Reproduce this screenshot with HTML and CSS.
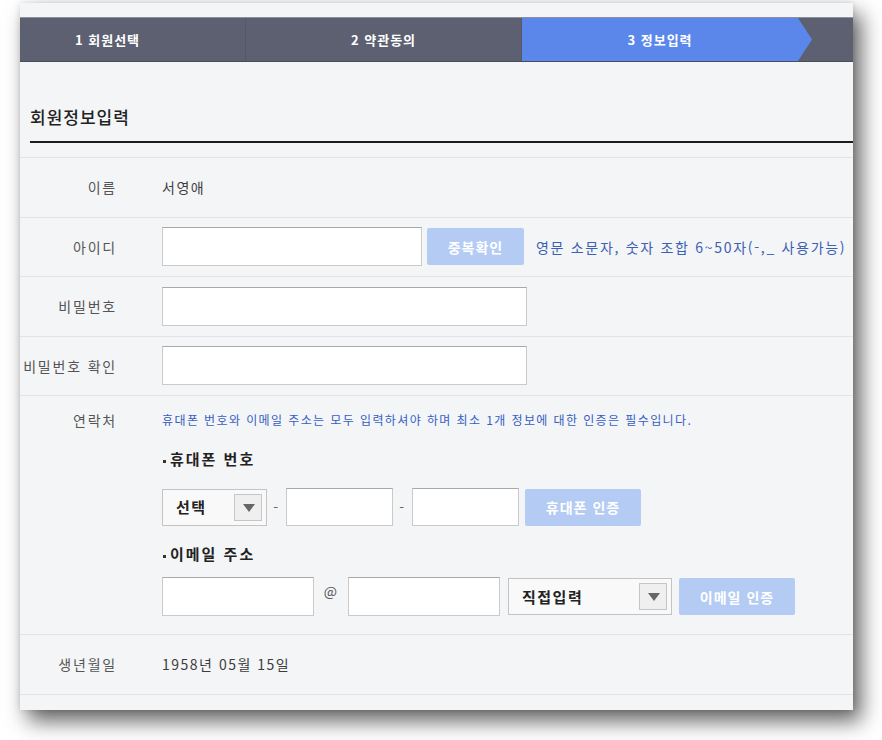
FILE: index.html
```html
<!DOCTYPE html>
<html lang="ko">
<head>
  <meta charset="UTF-8">
  <title>회원가입 - 정보입력</title>
  <link rel="stylesheet" href="styles.css">
</head>
<body>
  <div class="panel">
    <div class="top-gap"></div>

    <!-- 가입 단계 -->
    <nav class="steps">
      <div class="step first">1 회원선택</div>
      <div class="step">2 약관동의</div>
      <div class="step active">3 정보입력</div>
    </nav>

    <h2 class="title">회원정보입력</h2>

    <div class="form">
      <div class="row">
        <div class="label">이름</div>
        <div class="value">서영애</div>
      </div>

      <div class="row">
        <div class="label">아이디</div>
        <div class="value">
          <input type="text" class="field w-id">
          <button class="btn btn-dup">중복확인</button>
          <span class="hint">영문 소문자, 숫자 조합 6~50자(-,_ 사용가능)</span>
        </div>
      </div>

      <div class="row">
        <div class="label">비밀번호</div>
        <div class="value"><input type="password" class="field w-pw"></div>
      </div>

      <div class="row">
        <div class="label">비밀번호 확인</div>
        <div class="value"><input type="password" class="field w-pw"></div>
      </div>

      <div class="row contact">
        <div class="label">연락처</div>
        <div class="value">
          <p class="note">휴대폰 번호와 이메일 주소는 모두 입력하셔야 하며 최소 1개 정보에 대한 인증은 필수입니다.</p>

          <div class="sub-head">휴대폰 번호</div>
          <div class="line phone">
            <div class="select w-sel">
              <span>선택</span>
              <span class="arrow"></span>
            </div>
            <span class="sep">-</span>
            <input type="text" class="field w-tel">
            <span class="sep">-</span>
            <input type="text" class="field w-tel">
            <button class="btn btn-auth">휴대폰 인증</button>
          </div>

          <div class="sub-head mail">이메일 주소</div>
          <div class="line email">
            <input type="text" class="field w-mail">
            <span class="at">@</span>
            <input type="text" class="field w-mail">
            <div class="select w-domain">
              <span>직접입력</span>
              <span class="arrow"></span>
            </div>
            <button class="btn btn-auth">이메일 인증</button>
          </div>
        </div>
      </div>

      <div class="row">
        <div class="label">생년월일</div>
        <div class="value">1958년 05월 15일</div>
      </div>
    </div>
  </div>
</body>
</html>
```

FILE: styles.css
```css
body {
  margin: 0;
  padding-bottom: 30px;
  background: #fff;
  font-family: "Noto Sans CJK KR", "Noto Sans", sans-serif;
  color: #444;
}
/* Captured page with its shadow */
.panel {
  margin: 3px 0 0 20px;
  width: 833px;
  height: 707px;
  background: #f4f5f7;
  overflow: hidden;
  box-shadow: 8px 11px 20px rgba(0, 0, 0, 0.62), 0 0 6px rgba(0, 0, 0, 0.12);
}
.top-gap {
  height: 14px;
}
/* Step bar */
.steps {
  display: flex;
  height: 45px;
  background: #5c6071;
  border-top: 1px solid #8d90a0;
  border-bottom: 1px solid #4a4d5a;
  box-sizing: border-box;
}
.step {
  position: relative;
  flex: 0 0 276px;
  display: flex;
  align-items: center;
  justify-content: center;
  color: #fff;
  font-size: 13px;
  font-weight: bold;
  letter-spacing: 1px;
  border-right: 1px solid #545867;
  box-sizing: border-box;
}
.step.first {
  margin-left: -50px;
}
.step.active {
  background: #5b87eb;
  border-right: none;
}
.step.active::after {
  content: "";
  position: absolute;
  top: 0;
  right: -14px;
  width: 14px;
  height: 100%;
  background: #5b87eb;
  clip-path: polygon(0 0, 100% 50%, 0 100%);
}
/* Heading */
.title {
  margin: 0 0 14px 10px;
  padding: 44px 0 13px;
  line-height: 22px;
  font-size: 17px;
  font-weight: 500;
  letter-spacing: 1px;
  color: #222;
  border-bottom: 2px solid #1c1c1c;
}
/* Form rows */
.form {
  border-bottom: 1px solid #e1e3e6;
}
.row {
  display: flex;
  align-items: center;
  min-height: 58.5px;
  border-top: 1px solid #e1e3e6;
  font-size: 14px;
  letter-spacing: 1px;
}
.label {
  flex: 0 0 120px;
  box-sizing: border-box;
  padding-right: 23px;
  text-align: right;
  white-space: nowrap;
  letter-spacing: 1.8px;
  color: #555;
}
.value {
  flex: 1;
  display: flex;
  align-items: center;
  padding-left: 22px;
  letter-spacing: 1.5px;
  color: #3d3d3d;
}
.field {
  box-sizing: border-box;
  height: 39px;
  margin: 0;
  background: #fff;
  border: 1px solid #cacaca;
  border-top-color: #a9a9a9;
  border-radius: 0;
  padding: 0 8px;
  font: inherit;
}
.w-id { width: 260px; }
.w-pw { width: 365px; }
.w-tel { width: 107px; height: 38px; }
.w-mail { width: 152px; }
.btn {
  box-sizing: border-box;
  height: 37px;
  border: none;
  border-radius: 2px;
  background: #b4cbf4;
  color: #fff;
  font-family: inherit;
  font-size: 14px;
  font-weight: bold;
  letter-spacing: 1px;
  padding: 0;
}
.btn-dup {
  width: 97px;
  margin-left: 5px;
}
.hint {
  margin-left: 12px;
  color: #3c60b4;
  white-space: nowrap;
  letter-spacing: 1.7px;
}
/* Contact block */
.row.contact {
  align-items: flex-start;
  padding: 14px 0 18px;
}
.row.contact .label,
.row.contact .value {
  line-height: 20px;
}
.row.contact .value {
  flex-direction: column;
  align-items: flex-start;
}
.note {
  margin: 0;
  font-size: 12px;
  letter-spacing: 1.4px;
  color: #3560c2;
}
.sub-head {
  position: relative;
  margin-top: 19px;
  padding-left: 8px;
  font-size: 15px;
  font-weight: bold;
  color: #222;
  letter-spacing: 2px;
}
.sub-head::before {
  content: "";
  position: absolute;
  left: 1px;
  top: 11px;
  width: 3px;
  height: 3px;
  background: #333;
}
.sub-head.mail {
  margin-top: 18px;
}
.line {
  display: flex;
  align-items: center;
}
.line.phone {
  margin-top: 19px;
}
.line.email {
  margin-top: 13px;
}
.sep {
  width: 19px;
  text-align: center;
  color: #666;
}
.at {
  width: 34px;
  text-align: center;
  align-self: flex-start;
  margin-top: 4px;
  color: #555;
}
.select {
  box-sizing: border-box;
  display: flex;
  align-items: center;
  justify-content: space-between;
  height: 37px;
  padding: 0 4px 0 13px;
  background: #f9f9f9;
  border: 1px solid #c3c3c3;
  font-size: 15px;
  font-weight: bold;
  color: #222;
}
.w-sel { width: 105px; }
.w-domain {
  width: 164px;
  margin-left: 8px;
}
.arrow {
  position: relative;
  width: 28px;
  height: 27px;
  box-sizing: border-box;
  background: #efefef;
  border: 1px solid #c6c6c6;
}
.arrow::after {
  content: "";
  position: absolute;
  left: 8px;
  top: 9px;
  border-left: 6px solid transparent;
  border-right: 6px solid transparent;
  border-top: 8px solid #666;
}
.line .btn-auth {
  width: 116px;
  margin-left: 6px;
}
.line.email .btn-auth {
  margin-left: 7px;
}
```
